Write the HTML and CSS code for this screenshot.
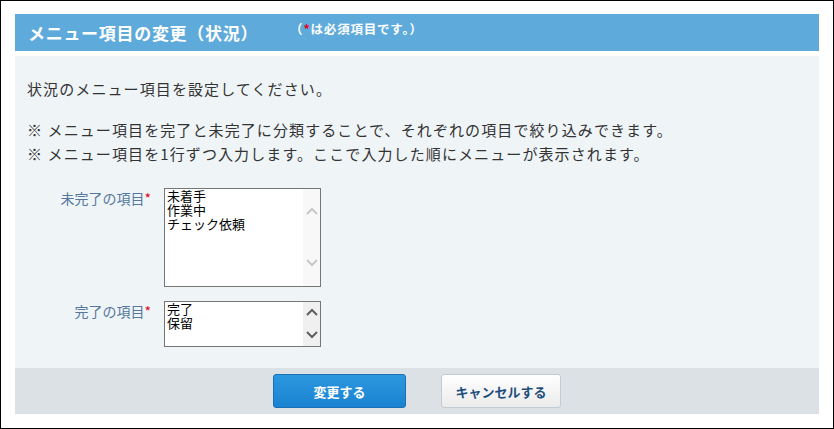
FILE: index.html
```html
<!DOCTYPE html>
<html lang="ja">
<head>
    <meta charset="UTF-8">
    <title>メニュー項目の変更（状況）</title>
    <link rel="stylesheet" href="styles.css">
</head>
<body>
    <div class="frame">
        <div class="head">
            <h1 class="head-title">メニュー項目の変更（状況）</h1>
            <span class="head-note">（<em class="req">*</em>は必須項目です。）</span>
        </div>

        <div class="panel">
            <p class="lead">状況のメニュー項目を設定してください。</p>
            <ul class="notes">
                <li>※ メニュー項目を完了と未完了に分類することで、それぞれの項目で絞り込みできます。</li>
                <li>※ メニュー項目を1行ずつ入力します。ここで入力した順にメニューが表示されます。</li>
            </ul>

            <div class="row">
                <label class="row-label" for="open_items">未完了の項目<em class="req">*</em></label>
                <div class="listbox listbox-tall">
                    <textarea id="open_items" class="listbox-text">未着手
作業中
チェック依頼</textarea>
                    <div class="scroll scroll-off">
                        <svg width="12" height="8" viewBox="0 0 12 8"><path d="M1 7 L6 2 L11 7" /></svg>
                        <svg width="12" height="8" viewBox="0 0 12 8"><path d="M1 1 L6 6 L11 1" /></svg>
                    </div>
                </div>
            </div>

            <div class="row">
                <label class="row-label" for="done_items">完了の項目<em class="req">*</em></label>
                <div class="listbox listbox-short">
                    <textarea id="done_items" class="listbox-text">完了
保留</textarea>
                    <div class="scroll">
                        <svg width="12" height="8" viewBox="0 0 12 8"><path d="M1 7 L6 2 L11 7" /></svg>
                        <svg width="12" height="8" viewBox="0 0 12 8"><path d="M1 1 L6 6 L11 1" /></svg>
                    </div>
                </div>
            </div>
        </div>

        <div class="foot">
            <button class="btn btn-main" type="button">変更する</button>
            <button class="btn btn-sub" type="button">キャンセルする</button>
        </div>
    </div>
</body>
</html>
```

FILE: styles.css
```css
* {
    padding: 0;
    margin: 0;
    box-sizing: border-box;
}

body {
    font-family: "Noto Sans CJK JP", "Noto Sans", sans-serif;
    color: #333;
    background-color: #fff;
}

.frame {
    width: 834px;
    height: 429px;
    border: 1px solid #000;
    padding: 13px 14px 14px;
}

.req {
    font-style: normal;
    color: #e8001c;
}

/* header */
.head {
    height: 37px;
    background-color: #5eaadb;
    display: flex;
    align-items: center;
    padding-left: 13px;
    color: #fff;
}

.head-title {
    font-size: 17px;
    font-weight: bold;
    line-height: 20px;
    letter-spacing: 0.7px;
}

.head-note {
    font-size: 12.5px;
    font-weight: bold;
    margin-left: 32px;
    margin-top: -8px;
    letter-spacing: 0.8px;
}

/* body */
.panel {
    margin-top: 5px;
    height: 312px;
    background-color: #eff4f7;
    padding: 21px 12px 0;
    font-size: 15px;
    color: #333;
}

.lead {
    line-height: 24px;
    letter-spacing: 1.1px;
}

.notes {
    list-style: none;
    margin-top: 17px;
    line-height: 24px;
    letter-spacing: 1.1px;
}

.row {
    display: flex;
    margin-top: 22px;
}

.row + .row {
    margin-top: 14px;
}

.row-label {
    width: 124px;
    margin-right: 13px;
    text-align: right;
    font-size: 14px;
    line-height: 20px;
    color: #56789c;
}

.listbox {
    width: 157px;
    display: flex;
    border: 1px solid #767676;
    background-color: #fff;
}

.listbox-tall {
    height: 99px;
}

.listbox-short {
    height: 46px;
}

.listbox-text {
    flex: 1;
    border: none;
    resize: none;
    overflow: hidden;
    outline: none;
    padding: 0 2px;
    font-family: "Noto Sans CJK JP", sans-serif;
    font-size: 13px;
    line-height: 14px;
    color: #000;
}

.scroll {
    width: 17px;
    background-color: #f0f0f0;
    display: flex;
    flex-direction: column;
    justify-content: space-between;
    align-items: center;
    padding: 6px 0 7px;
}

.scroll path {
    fill: none;
    stroke: #606060;
    stroke-width: 2;
}

.scroll-off {
    background-color: #f8f8f8;
    padding: 18px 0 19px;
}

.scroll-off path {
    stroke: #c8c8c8;
}

/* footer */
.foot {
    height: 46px;
    background-color: #dce1e6;
    display: flex;
    justify-content: center;
    align-items: center;
    gap: 35px;
}

.btn {
    height: 34px;
    border-radius: 3px;
    font-family: "Noto Sans CJK JP", sans-serif;
    font-size: 13px;
    font-weight: bold;
    cursor: pointer;
}

.btn-main {
    width: 133px;
    color: #fff;
    border: 1px solid #1b6fb3;
    background: linear-gradient(#2c98de, #1a83d2);
}

.btn-sub {
    width: 120px;
    color: #1f4e7c;
    border: 1px solid #c4cbd2;
    background: linear-gradient(#fff, #ebebeb);
}
```
